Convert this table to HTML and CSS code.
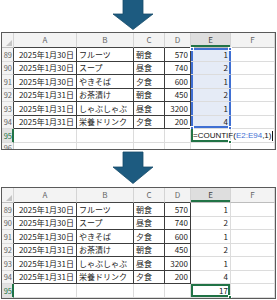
FILE: index.html
```html
<!DOCTYPE html>
<html lang="ja">
<head>
<meta charset="utf-8">
<link rel="stylesheet" href="styles.css">
</head>
<body>
<div class="arrow arrow-top">
  <svg width="42" height="32" viewBox="0 0 42 32"><polygon points="11,-4 31,-4 31,14 41,14 21,29.5 1,14 11,14" fill="#1d5b80" stroke="#174b6a" stroke-width="0.8"/></svg>
</div>

<div class="sheet sheet-1">
  <div class="c h corner"></div><div class="c h hk">A</div><div class="c h hk">B</div><div class="c h hk">C</div><div class="c h hk">D</div><div class="c h hsel">E</div><div class="c h">F</div>

  <div class="c r rk">89</div><div class="c k num">2025年1月30日</div><div class="c k">フルーツ</div><div class="c k">朝食</div><div class="c k num">570</div><div class="c num sel sel-top">1<i class="hd tl"></i><i class="hd tr"></i></div><div class="c"></div>
  <div class="c r rk">90</div><div class="c k num">2025年1月30日</div><div class="c k">スープ</div><div class="c k">昼食</div><div class="c k num">740</div><div class="c num sel">2</div><div class="c"></div>
  <div class="c r rk">91</div><div class="c k num">2025年1月30日</div><div class="c k">やきそば</div><div class="c k">夕食</div><div class="c k num">600</div><div class="c num sel">1</div><div class="c"></div>
  <div class="c r rk">92</div><div class="c k num">2025年1月31日</div><div class="c k">お茶漬け</div><div class="c k">朝食</div><div class="c k num">450</div><div class="c num sel">2</div><div class="c"></div>
  <div class="c r rk">93</div><div class="c k num">2025年1月31日</div><div class="c k">しゃぶしゃぶ</div><div class="c k">昼食</div><div class="c k num">3200</div><div class="c num sel">1</div><div class="c"></div>
  <div class="c r rk">94</div><div class="c k num">2025年1月31日</div><div class="c k">栄養ドリンク</div><div class="c k">夕食</div><div class="c k num">200</div><div class="c num sel sel-bot">4<i class="hd bl"></i><i class="hd br"></i></div><div class="c"></div>
  <div class="c r ract">95</div><div class="c"></div><div class="c"></div><div class="c"></div><div class="c"></div><div class="c edit"><span class="formula">=COUNTIF(<span class="ref">E2:E94</span>,1)<span class="caret"></span></span><i class="fh"></i></div><div class="c"></div>
  <div class="c r">96</div><div class="c"></div><div class="c"></div><div class="c"></div><div class="c"></div><div class="c"></div><div class="c"></div>
</div>

<div class="arrow arrow-mid">
  <svg width="42" height="37" viewBox="0 0 42 37"><polygon points="11,2 31,2 31,17 41,17 21,33.5 1,17 11,17" fill="#1d5b80" stroke="#174b6a" stroke-width="0.8"/></svg>
</div>

<div class="sheet sheet-2">
  <div class="c h corner"></div><div class="c h hk">A</div><div class="c h hk">B</div><div class="c h hk">C</div><div class="c h hk">D</div><div class="c h hsel">E</div><div class="c h">F</div>

  <div class="c r rk">89</div><div class="c k num">2025年1月30日</div><div class="c k">フルーツ</div><div class="c k">朝食</div><div class="c k num">570</div><div class="c num">1</div><div class="c"></div>
  <div class="c r rk">90</div><div class="c k num">2025年1月30日</div><div class="c k">スープ</div><div class="c k">昼食</div><div class="c k num">740</div><div class="c num">2</div><div class="c"></div>
  <div class="c r rk">91</div><div class="c k num">2025年1月30日</div><div class="c k">やきそば</div><div class="c k">夕食</div><div class="c k num">600</div><div class="c num">1</div><div class="c"></div>
  <div class="c r rk">92</div><div class="c k num">2025年1月31日</div><div class="c k">お茶漬け</div><div class="c k">朝食</div><div class="c k num">450</div><div class="c num">2</div><div class="c"></div>
  <div class="c r rk">93</div><div class="c k num">2025年1月31日</div><div class="c k">しゃぶしゃぶ</div><div class="c k">昼食</div><div class="c k num">3200</div><div class="c num">1</div><div class="c"></div>
  <div class="c r rk">94</div><div class="c k num">2025年1月31日</div><div class="c k">栄養ドリンク</div><div class="c k">夕食</div><div class="c k num">200</div><div class="c num">4</div><div class="c"></div>
  <div class="c r ract">95</div><div class="c"></div><div class="c"></div><div class="c"></div><div class="c"></div><div class="c num active">17<i class="fh"></i></div><div class="c"></div>
</div>
</body>
</html>
```

FILE: styles.css
```css
* { box-sizing: border-box; margin: 0; padding: 0; }

body {
  margin: 0;
  width: 277px;
  background: #fff;
  font-family: "Noto Sans CJK JP", "Noto Sans", sans-serif;
  font-size: 8px;
  color: #222;
}

.arrow { padding-left: 112px; }
.arrow-top { height: 32px; }
.arrow-mid { height: 37px; }
.arrow svg { display: block; overflow: visible; }

.sheet {
  margin-left: 1px;
  width: 275px;
  border: 1px solid #5a5a5a;
  display: grid;
  grid-template-columns: 12px 63px 57px 31px 26px 40px 44px;
  grid-template-rows: 15px 14px 13px 14px 13px 14px 13px 14px;
  grid-auto-rows: 14px;
  overflow: hidden;
}
.sheet-1 { height: 118px; }
.sheet-2 { height: 112px; }

.c {
  position: relative;
  display: flex;
  align-items: center;
  padding: 0 2px;
  border-right: 1px solid #dcdcdc;
  border-bottom: 1px solid #dcdcdc;
  white-space: nowrap;
  overflow: hidden;
  line-height: 1;
}
.num { justify-content: flex-end; }

.h {
  background: #f3f3f3;
  color: #666;
  justify-content: center;
  border-right-color: #d4d4d4;
  border-bottom-color: #bdbdbd;
}
.hk { border-bottom-color: #454545; }
.hsel {
  background: #dedede;
  color: #444;
  box-shadow: inset 0 -2px 0 #217346;
}

.corner::after {
  content: "";
  position: absolute;
  right: 1px;
  bottom: 1px;
  border-style: solid;
  border-width: 0 0 6px 6px;
  border-color: transparent transparent #c4c4c4 transparent;
}

.r {
  background: #f3f3f3;
  color: #666;
  justify-content: flex-end;
  padding: 0 1px 0 0;
  border-right-color: #c8c8c8;
  border-bottom-color: #dcdcdc;
  font-size: 7.5px;
}
.rk { border-right-color: #454545; }
.ract {
  background: #e2e2e2;
  color: #217346;
  border-right-color: #217346;
  box-shadow: inset -1px 0 0 #217346;
}
.sheet-1 .r:last-child, .sheet-1 .c:nth-last-child(-n+7) { align-items: flex-start; padding-top: 1px; }

.k {
  border-right-color: #3c3c3c;
  border-bottom-color: #3c3c3c;
}

.sel {
  background: #e5ebf6;
  overflow: visible;
  z-index: 2;
  border-right-color: #3f6fd3;
  box-shadow: inset 2px 0 0 #3f6fd3, inset -1px 0 0 #3f6fd3;
}
.sel-top { box-shadow: inset 2px 0 0 #3f6fd3, inset -1px 0 0 #3f6fd3, inset 0 2px 0 #3f6fd3; }
.sel-bot { box-shadow: inset 2px 0 0 #3f6fd3, inset -1px 0 0 #3f6fd3, inset 0 -2px 0 #3f6fd3; }

.hd {
  position: absolute;
  width: 4px;
  height: 4px;
  background: #3f6fd3;
  border: 1px solid #fff;
}
.tl { left: -1px; top: -1px; }
.tr { right: -2px; top: -1px; }
.bl { left: -1px; bottom: -2px; }
.br { right: -2px; bottom: -2px; }

.edit {
  overflow: visible;
  z-index: 3;
  padding-left: 2px;
  box-shadow: inset 2px 0 0 #217346, inset 0 -2px 0 #217346;
}
.formula {
  font-family: "Liberation Sans", Arial, sans-serif;
  font-size: 8px;
  color: #111;
  display: flex;
  align-items: center;
}
.ref { color: #3f6fd3; }
.caret {
  display: inline-block;
  width: 1px;
  height: 10px;
  background: #111;
  margin-left: 1px;
}

.active {
  overflow: visible;
  z-index: 3;
  box-shadow: inset 0 0 0 2px #217346;
}

.fh {
  position: absolute;
  right: -2px;
  bottom: -2px;
  width: 4px;
  height: 4px;
  background: #217346;
  border: 1px solid #fff;
}
```
